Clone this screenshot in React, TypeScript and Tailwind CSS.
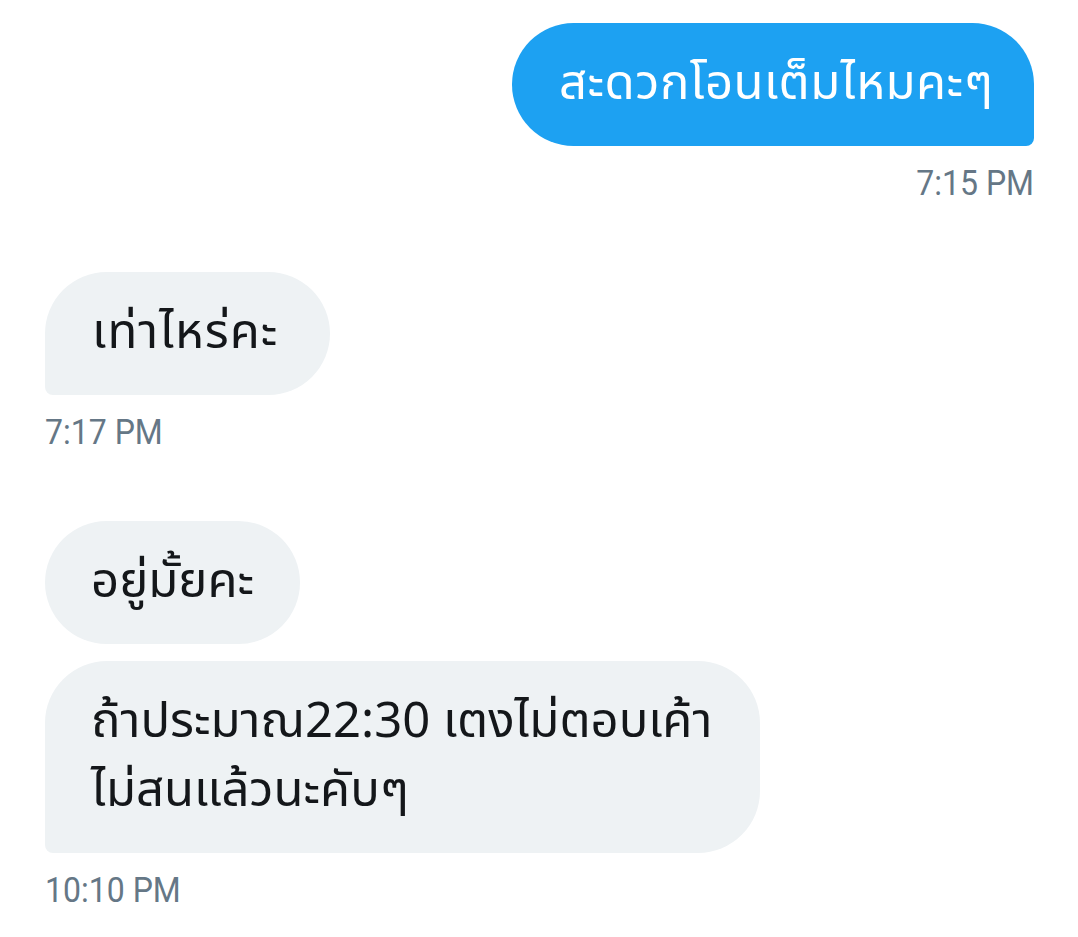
import React from "react";

export default function App() {
  return (
    <div className="w-[1078px] h-[937px] bg-white px-[44px] pt-[23px] overflow-hidden">
      <div className="flex flex-col items-end">
        <div className="w-[522px] whitespace-nowrap bg-[#1DA1F2] text-white [font-family:'Noto_Sans_Thai','Noto_Sans',sans-serif] text-[49px] leading-[69px] py-[27px] pl-[47px] pr-[30px] tracking-[0.5px] rounded-[62px] rounded-br-[8px]">
          สะดวกโอนเต็มไหมคะๆ
        </div>
        <div className="mt-[19px] [font-family:Roboto,'Liberation_Sans',sans-serif] text-[32px] leading-[32px] text-[#657786] scale-y-[1.1] origin-top">
          7:15 PM
        </div>
      </div>

      <div className="flex flex-col items-start mt-[75px] pl-[1px]">
        <div className="w-[285px] whitespace-nowrap bg-[#EEF2F4] text-[#14171A] [font-family:'Noto_Sans_Thai','Noto_Sans',sans-serif] text-[49px] leading-[69px] py-[27px] pl-[47px] pr-[20px] tracking-[1px] rounded-[62px] rounded-bl-[8px]">
          เท่าไหร่คะ
        </div>
        <div className="mt-[19px] [font-family:Roboto,'Liberation_Sans',sans-serif] text-[32px] leading-[32px] text-[#657786] scale-y-[1.1] origin-top">
          7:17 PM
        </div>
      </div>

      <div className="flex flex-col items-start mt-[75px] pl-[1px] gap-[17px]">
        <div className="w-[255px] whitespace-nowrap bg-[#EEF2F4] text-[#14171A] [font-family:'Noto_Sans_Thai','Noto_Sans',sans-serif] text-[49px] leading-[69px] py-[27px] pl-[46px] pr-[20px] rounded-[62px]">
          อยู่มั้ยคะ
        </div>
        <div className="w-[715px] whitespace-nowrap bg-[#EEF2F4] text-[#14171A] [font-family:'Noto_Sans_Thai','Noto_Sans',sans-serif] text-[49px] leading-[69px] py-[27px] pl-[46px] pr-[30px] rounded-[62px] rounded-bl-[8px]">
          ถ้าประมาณ22:30 เตงไม่ตอบเค้า
          <br />
          ไม่สนแล้วนะคับๆ
        </div>
        <div className="mt-[2px] [font-family:Roboto,'Liberation_Sans',sans-serif] text-[32px] leading-[32px] text-[#657786] scale-y-[1.1] origin-top">
          10:10 PM
        </div>
      </div>
    </div>
  );
}
